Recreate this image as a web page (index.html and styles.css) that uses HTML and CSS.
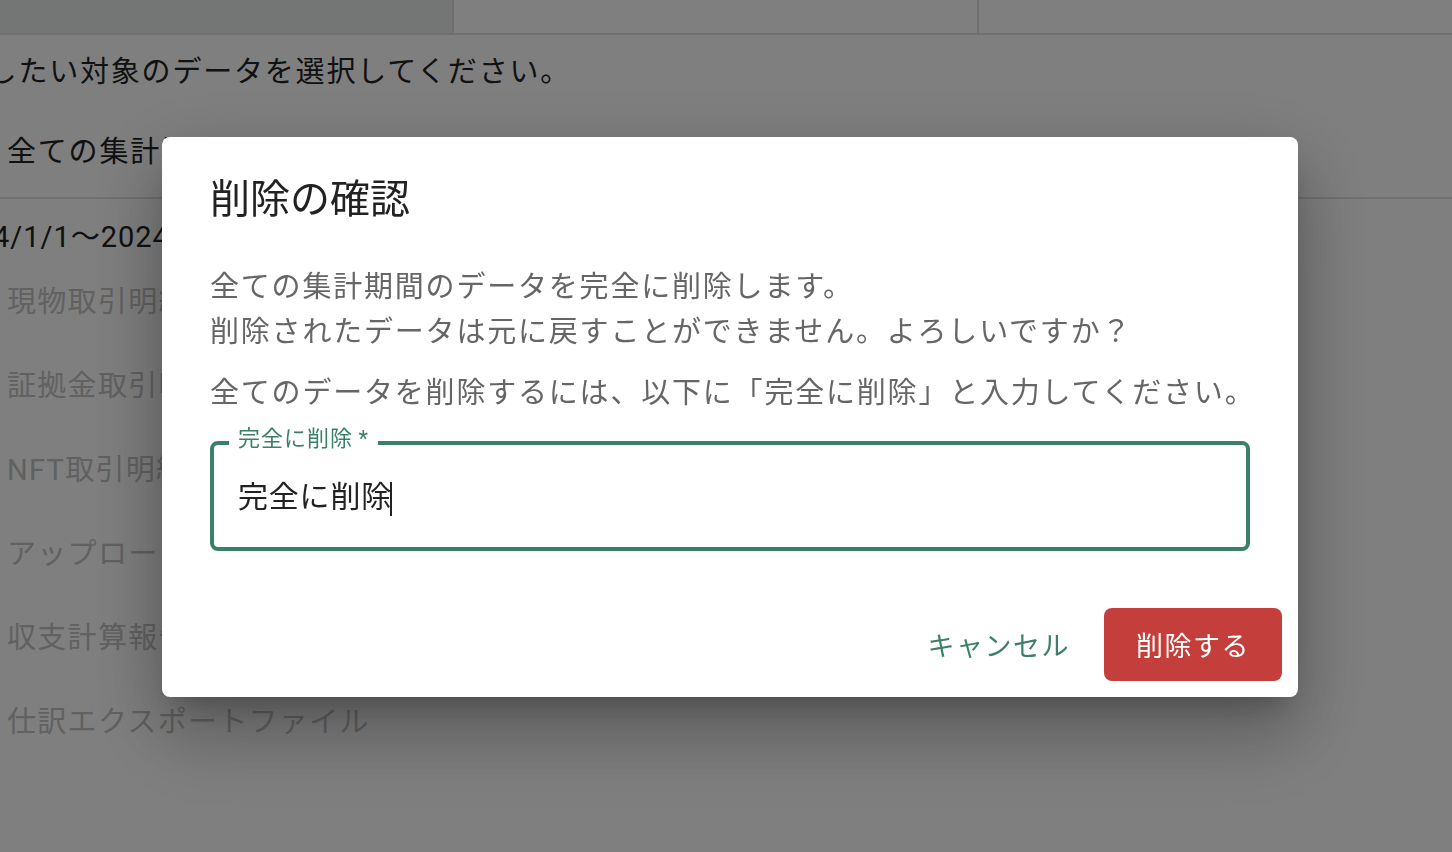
FILE: index.html
```html
<!DOCTYPE html>
<html lang="ja">
<head>
<meta charset="utf-8">
<title>削除の確認</title>
<link rel="stylesheet" href="styles.css">
</head>
<body>
<div class="page">
  <div class="topbar">
    <div class="cell cell-active"></div>
    <div class="cell"></div>
    <div class="cell"></div>
  </div>
  <p class="lead">削除したい対象のデータを選択してください。</p>
  <div class="scope-row"><span>全ての集計期間</span></div>
  <div class="period">2024/1/1〜2024/12/31</div>
  <ul class="items">
    <li>現物取引明細</li>
    <li>証拠金取引明細</li>
    <li>NFT取引明細</li>
    <li>アップロードファイル</li>
    <li>収支計算報告書</li>
    <li>仕訳エクスポートファイル</li>
  </ul>
</div>

<div class="backdrop">
  <div class="dialog" role="dialog">
    <h2 class="dialog-title">削除の確認</h2>
    <div class="dialog-content">
      <p class="msg">全ての集計期間のデータを完全に削除します。<br>削除されたデータは元に戻すことができません。よろしいですか？</p>
      <p class="msg">全てのデータを削除するには、以下に「完全に削除」と入力してください。</p>
      <fieldset class="field">
        <legend class="field-label">完全に削除&thinsp;*</legend>
        <div class="field-value">完全に削除<span class="caret"></span></div>
      </fieldset>
    </div>
    <div class="dialog-actions">
      <button class="btn btn-text">キャンセル</button>
      <button class="btn btn-danger">削除する</button>
    </div>
  </div>
</div>
</body>
</html>
```
FILE: styles.css
```css
html, body {
  margin: 0;
  padding: 0;
}
body {
  width: 1452px;
  height: 852px;
  overflow: hidden;
  background: #ffffff;
  font-family: Roboto, "Noto Sans CJK JP", sans-serif;
  color: #222222;
}

/* ---------- page behind the dialog ---------- */
.page {
  font-size: 29px;
  letter-spacing: 1.8px;
  white-space: nowrap;
}
.topbar {
  display: flex;
  height: 33px;
  border-bottom: 2px solid #dedede;
}
.cell {
  flex: 0 0 auto;
  width: 523px;
  border-right: 2px solid #dedede;
}
.cell-active {
  width: 452px;
  background: #e8ecea;
}
.cell:last-child {
  flex: 1;
  border-right: none;
}
.lead {
  margin: 15px 0 0;
  line-height: 45px;
  text-indent: -74px;
  color: #222222;
}
.scope-row {
  padding: 35px 7px 22px;
  line-height: 45px;
  border-bottom: 2px solid #e0e0e0;
  color: #222222;
}
.period {
  padding-top: 16px;
  line-height: 45px;
  text-indent: -59px;
  letter-spacing: 1px;
  color: #222222;
}
.items {
  list-style: none;
  margin: 0;
  padding: 0 7px;
}
.items li {
  line-height: 84px;
  letter-spacing: 1.3px;
  color: #c2c2c2;
}

/* ---------- backdrop + dialog ---------- */
.backdrop {
  position: fixed;
  inset: 0;
  background: rgba(0, 0, 0, 0.5);
  padding: 137px 0 0 162px;
}
.dialog {
  width: 1136px;
  background: #ffffff;
  border-radius: 8px;
  box-shadow:
    0 22px 70px 8px rgba(0, 0, 0, 0.18),
    0 48px 76px 6px rgba(0, 0, 0, 0.12),
    0 18px 30px -14px rgba(0, 0, 0, 0.25);
}
.dialog-title {
  margin: 0;
  padding: 33px 48px 35px;
  font-size: 40px;
  line-height: 60px;
  font-weight: 400;
  color: #222222;
}
.dialog-content {
  padding: 0 48px 41px;
}
.msg {
  margin: 0;
  font-size: 29px;
  letter-spacing: 1.8px;
  line-height: 45px;
  white-space: nowrap;
  color: #666666;
}
.msg + .msg {
  margin-top: 16px;
}
.field {
  margin: 8px 0 0;
  padding: 0 0 15px 15px;
  border: 4px solid #3b7f6a;
  border-radius: 8px;
  min-width: 0;
}
.field-label {
  padding: 0 9px 8px;
  font-size: 22px;
  line-height: 30px;
  letter-spacing: 1px;
  color: #3b7f6a;
}
.field-value {
  padding-left: 9px;
  font-size: 30px;
  letter-spacing: 0.8px;
  line-height: 70px;
  color: #222222;
}
.caret {
  display: inline-block;
  width: 2px;
  height: 34px;
  margin-left: -2px;
  background: #222222;
  vertical-align: middle;
}
.dialog-actions {
  display: flex;
  justify-content: flex-end;
  align-items: center;
  gap: 18px;
  padding: 16px;
}
.btn {
  height: 73px;
  border: none;
  border-radius: 8px;
  font-family: Roboto, "Noto Sans CJK JP", sans-serif;
  font-size: 27px;
  letter-spacing: 1.5px;
  font-weight: 400;
  cursor: pointer;
}
.btn-text {
  padding: 0 16px;
  background: transparent;
  color: #3b7f6a;
}
.btn-danger {
  padding: 0 32px;
  background: #c43f3b;
  color: #ffffff;
}
```
